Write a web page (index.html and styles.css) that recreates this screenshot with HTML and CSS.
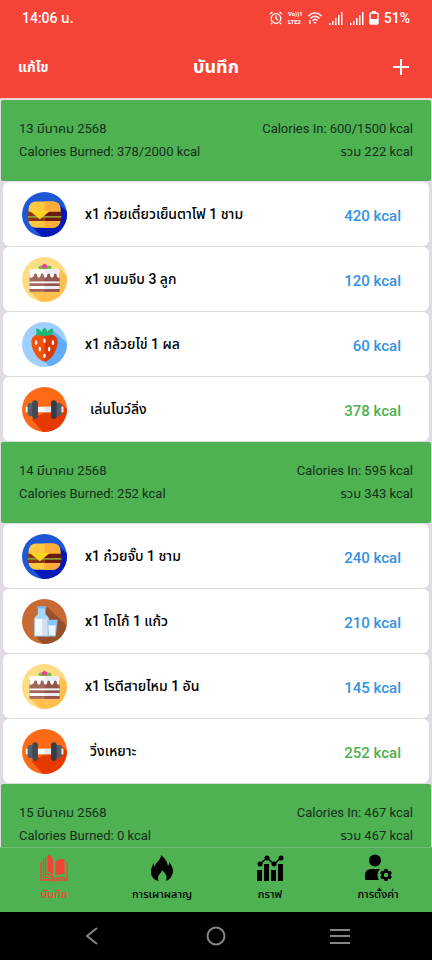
FILE: index.html
```html
<!DOCTYPE html>
<html lang="th">
<head>
<meta charset="utf-8">
<meta name="viewport" content="width=device-width, initial-scale=1">
<title>บันทึก</title>
<link rel="stylesheet" href="styles.css">
</head>
<body>
<svg class="sprite" aria-hidden="true">
  <defs>
    <clipPath id="disc"><circle cx="24" cy="24" r="24"/></clipPath>
    <symbol id="burger" viewBox="0 0 48 48">
      <g clip-path="url(#disc)">
        <path fill="#1f58d6" d="M0 0h48v48H0z"/>
        <path fill="#0519b8" d="M39 13l12 10v28H24L10 36z"/>
        <rect x="7" y="10" width="34" height="28" rx="8" fill="#ffc93f"/>
        <path fill="#ffad3a" d="M24 10h9a8 8 0 0 1 8 8v12a8 8 0 0 1-8 8h-9z"/>
        <path fill="#8a3514" d="M6 21h18v10H6z"/>
        <path fill="#6b1a10" d="M24 21h18v10H24z"/>
        <path fill="#8d9a33" d="M6 25.500h36v2H6z"/>
        <path fill="#ffd21f" d="M8 20h22L19 29z"/>
      </g>
    </symbol>
    <symbol id="cake" viewBox="0 0 48 48">
      <g clip-path="url(#disc)">
        <path fill="#ffdd85" d="M0 0h48v48H0z"/>
        <path fill="#ffc04f" d="M40 12l10 10v28H22L8 36z"/>
        <path fill="#6ec04a" d="M17 11c3-3 5-2 7 1 2-3 5-4 8-1l-2 2H19z"/>
        <path fill="#e93c9a" d="M22 12l-1-3 3-2 3 2-1 3z"/>
        <path fill="#a5665b" d="M8 17h32v20H8z"/>
        <path fill="#945449" d="M24 17h16v20H24z"/>
        <path fill="#fff" d="M8 13h32v9c-2 1-3-1-3-3s-3-2-3 0c0 4-4 4-4 0 0-2-3-2-3 0 0 4-4 4-4 0 0-2-3-2-3 0 0 4-4 4-4 0 0-2-3-2-3 0s-3 4-5 3zM8 26h32v2H8zM8 31h32v3H8z"/>
        <path fill="#dce2ec" opacity=".6" d="M24 13h16v5H24zM24 26h16v2H24zM24 31h16v3H24z"/>
      </g>
    </symbol>
    <symbol id="berry" viewBox="0 0 48 48">
      <g clip-path="url(#disc)">
        <path fill="#9fcfff" d="M0 0h48v48H0z"/>
        <path fill="#62adfa" d="M32 8l18 16v26H32L20 38z"/>
        <path fill="#f4510b" d="M24 14c8-3 14 1 14 7 0 9-8 21-14 21s-14-12-14-21c0-6 6-10 14-7z"/>
        <path fill="#d93b05" d="M24 14c8-3 14 1 14 7 0 9-8 21-14 21z"/>
        <path fill="#22b573" d="M24 15l-9-1c1-2 0-4 0-7 3 0 5 2 6 4 0-3 2-4 3-5 2 1 3 3 3 5 1-2 3-4 6-4 0 3 0 5-1 7z"/>
        <g fill="#fff"><ellipse cx="24" cy="20" rx="1.300" ry="2.500"/><ellipse cx="15" cy="22" rx="1.300" ry="2.500"/><ellipse cx="33" cy="22" rx="1.300" ry="2.500"/><ellipse cx="19" cy="29" rx="1.300" ry="2.500"/><ellipse cx="29" cy="29" rx="1.300" ry="2.500"/><ellipse cx="24" cy="36" rx="1.300" ry="2.500"/></g>
      </g>
    </symbol>
    <symbol id="milk" viewBox="0 0 48 48">
      <g clip-path="url(#disc)">
        <path fill="#c86a34" d="M0 0h48v48H0z"/>
        <path fill="#98502b" d="M26 8l24 22v20H24L14 39z"/>
        <path fill="#a9d7fb" d="M17 8h8v7c0 3 4 3 4 8v17H13V23c0-5 4-5 4-8z"/>
        <path fill="#f4f6fb" d="M14 21h8v18h-8z"/>
        <path fill="#d3def0" d="M22 21h5v18h-5z"/>
        <path fill="#6fb6f5" d="M16 8h10v2H16z"/>
        <path fill="#8ac6fa" d="M27 22h11l-2 18h-8z"/>
        <path fill="#eef3fb" d="M28 28h8l-1 11h-6z"/>
      </g>
    </symbol>
    <symbol id="dumbbell" viewBox="0 0 48 48">
      <g clip-path="url(#disc)">
        <path fill="#ff6a16" d="M0 0h48v48H0z"/>
        <path fill="#e63900" d="M41 17l9 8v25H24L10 34l21-10z"/>
        <path fill="#fff" d="M4 21h40v6H4z"/>
        <path fill="#e1e6ef" d="M24 21h20v6H24z"/>
        <rect x="6" y="17" width="9" height="14" rx="3" fill="#565d6b"/>
        <rect x="11" y="14" width="6" height="20" rx="3" fill="#414856"/>
        <rect x="33" y="17" width="9" height="14" rx="3" fill="#565d6b"/>
        <rect x="31" y="14" width="6" height="20" rx="3" fill="#343c49"/>
      </g>
    </symbol>
    <symbol id="signal" viewBox="0 0 14 13">
      <path fill="#fff" d="M0 11h1.500v2H0zM3 9h1.500v4H3zM6 6h1.500v7H6zM9 3h1.500v10H9zM12 0h1.500v13H12z"/>
    </symbol>
  </defs>
</svg>

<div class="statusbar">
  <span>14:06 น.</span>
  <div class="status-icons">
    <svg class="alarm" viewBox="0 0 14 14"><g fill="none" stroke="#fff" stroke-width="1.300"><circle cx="7" cy="7.500" r="4.800"/><path d="M7 4.500v3l2 1.500M1 3l2.500-2M13 3l-2.500-2M3 12l-1 1M11 12l1 1"/></g></svg>
    <span class="volte"><span>Vo))1</span><span>LTE2</span></span>
    <svg class="wifi" viewBox="0 0 14 12"><g fill="none" stroke="#fff" stroke-width="1.400"><path d="M.5 4c4-4 9-4 13 0M2.500 6.500c3-3 6-3 9 0M4.500 8.800c2-2 3-2 5 0"/></g><path fill="#fff" d="M5.500 10h3L7 12zM1 8h1.500v4H1z"/></svg>
    <svg class="bars"><use href="#signal"/></svg>
    <svg class="bars"><use href="#signal"/></svg>
    <svg class="battery" viewBox="0 0 10 14"><path fill="#fff" d="M3 0h4v2H3z"/><rect x="1" y="2" width="8" height="11" rx="1" fill="none" stroke="#fff" stroke-width="1.500"/><path fill="#fff" d="M1 8h8v5H1z"/></svg>
    <span>51%</span>
  </div>
</div>

<header class="appbar">
  <button class="edit" type="button">แก้ไข</button>
  <h1>บันทึก</h1>
  <button class="add" type="button" aria-label="เพิ่ม"><svg viewBox="0 0 16 16"><path stroke="#fff" stroke-width="2" d="M8 0v16M0 8h16"/></svg></button>
</header>

<main class="log">
  <section class="day">
    <div class="summary">
      <p><span>13 มีนาคม 2568</span><span>Calories In: 600/1500 kcal</span></p>
      <p><span>Calories Burned: 378/2000 kcal</span><span>รวม 222 kcal</span></p>
    </div>
    <ul>
      <li><svg><use href="#burger"/></svg><span class="name">x1 ก๋วยเตี๋ยวเย็นตาโฟ 1 ชาม</span><span class="kcal">420 kcal</span></li>
      <li><svg><use href="#cake"/></svg><span class="name">x1 ขนมจีบ 3 ลูก</span><span class="kcal">120 kcal</span></li>
      <li><svg><use href="#berry"/></svg><span class="name">x1 กล้วยไข่ 1 ผล</span><span class="kcal">60 kcal</span></li>
      <li class="exercise"><svg><use href="#dumbbell"/></svg><span class="name">เล่นโบว์ลิ่ง</span><span class="kcal">378 kcal</span></li>
    </ul>
  </section>
  <section class="day">
    <div class="summary">
      <p><span>14 มีนาคม 2568</span><span>Calories In: 595 kcal</span></p>
      <p><span>Calories Burned: 252 kcal</span><span>รวม 343 kcal</span></p>
    </div>
    <ul>
      <li><svg><use href="#burger"/></svg><span class="name">x1 ก๋วยจั๊บ 1 ชาม</span><span class="kcal">240 kcal</span></li>
      <li><svg><use href="#milk"/></svg><span class="name">x1 โกโก้ 1 แก้ว</span><span class="kcal">210 kcal</span></li>
      <li><svg><use href="#cake"/></svg><span class="name">x1 โรตีสายไหม 1 อัน</span><span class="kcal">145 kcal</span></li>
      <li class="exercise"><svg><use href="#dumbbell"/></svg><span class="name">วิ่งเหยาะ</span><span class="kcal">252 kcal</span></li>
    </ul>
  </section>
  <section class="day">
    <div class="summary">
      <p><span>15 มีนาคม 2568</span><span>Calories In: 467 kcal</span></p>
      <p><span>Calories Burned: 0 kcal</span><span>รวม 467 kcal</span></p>
    </div>
  </section>
</main>

<nav class="tabs">
  <a class="active" href="#log">
    <svg viewBox="0 0 28 28"><path fill="currentColor" d="M7.500 1c3 0 5.500 2 5.500 6v15c-1-3-3-4-5.500-4.500zM15.500 8c1-2 4-3 9-3v15c-4 0-7 0-9 2z"/><path fill="none" stroke="currentColor" stroke-width="1.300" d="M1 8v18h10c1 1.500 5 1.500 6 0h10V8M3.500 5v18.500c5-1 8 0 10 2 2-2 6-2 11-2M5.700 3v17c4 0 6 1 8 4"/></svg>
    <span>บันทึก</span>
  </a>
  <a href="#burn">
    <svg viewBox="0 0 28 28"><path fill="currentColor" d="M13 1c6 5 6 8 7 11 1-1 1-2 1-4 4 5 5 9 3 13-1 3-3 5-6 6 2-5-1-8-4-11 0 3-4 4-4 8 0 1 0 2 1 3-5-1-8-4-8-9 0-4 1-6 3-9 0 2 0 3 1 4 0-5 6-6 6-12z"/></svg>
    <span>การเผาผลาญ</span>
  </a>
  <a href="#chart">
    <svg viewBox="0 0 28 28"><g fill="currentColor"><path d="M1 16h5v11H1zM8 10h5v17H8zM15 16h5v11h-5zM22 10h5v17h-5z"/><circle cx="4" cy="10" r="2.500"/><circle cx="11" cy="4" r="2.500"/><circle cx="18" cy="10" r="2.500"/><circle cx="25" cy="4" r="2.500"/></g><path fill="none" stroke="currentColor" stroke-width="1.500" d="M4 10l7-6 7 6 7-6"/></svg>
    <span>กราฟ</span>
  </a>
  <a href="#settings">
    <svg viewBox="0 0 28 28"><circle cx="11" cy="6.500" r="6" fill="currentColor"/><path fill="currentColor" d="M1 26v-5c0-4 3-6 7-6h8c-3 3-3 8-1 11z"/><circle cx="22" cy="21" r="3.500" fill="none" stroke="currentColor" stroke-width="2.600"/><g stroke="currentColor" stroke-width="3"><path d="M22 15v2M22 25v2M16.800 18l1.700 1M25.500 23l1.700 1M16.800 24l1.700-1M25.500 19l1.700-1"/></g></svg>
    <span>การตั้งค่า</span>
  </a>
</nav>

<div class="sysnav">
  <button type="button" aria-label="ย้อนกลับ"><svg viewBox="0 0 20 20"><path d="M15 2L5 10l10 8"/></svg></button>
  <button type="button" aria-label="หน้าหลัก"><svg viewBox="0 0 20 20"><circle cx="10" cy="10" r="8.500"/></svg></button>
  <button type="button" aria-label="แอปล่าสุด"><svg viewBox="0 0 20 20"><path d="M0 4h20M0 10h20M0 17h20"/></svg></button>
</div>
</body>
</html>
```
FILE: styles.css
```css
* { box-sizing: border-box; }

body {
  margin: 0;
  height: 100vh;
  display: flex;
  flex-direction: column;
  font-family: Roboto, "Noto Sans Thai", "Noto Sans", sans-serif;
  font-size: 13px;
  color: #000;
  background: #e0dae2;
}

h1, p, ul { margin: 0; padding: 0; }
ul { list-style: none; }
svg { display: block; flex: none; }
.sprite { position: absolute; width: 0; height: 0; }

button {
  padding: 0;
  border: 0;
  background: none;
  color: inherit;
  font: inherit;
}

.statusbar,
.appbar {
  flex: none;
  display: flex;
  align-items: center;
  justify-content: space-between;
  background: #f64438;
  color: #fff;
}

.statusbar {
  height: 36px;
  padding: 0 22px;
  font-size: 14px;
  font-weight: 500;
}

.status-icons { display: flex; align-items: center; gap: 5px; }
.alarm { width: 14px; height: 14px; }
.volte { display: flex; flex-direction: column; font-size: 6px; line-height: 8px; font-weight: 700; }
.wifi { width: 14px; height: 12px; }
.bars { width: 14px; height: 13px; margin-left: 2px; }
.battery { width: 10px; height: 14px; }

.appbar {
  display: grid;
  grid-template-columns: 1fr auto 1fr;
  height: 63px;
  padding: 0 18px;
  border-bottom: 1px solid #edd3c4;
}

.edit { justify-self: start; font-size: 14px; font-weight: 700; }
.appbar h1 { font-size: 18px; font-weight: 700; }
.add { justify-self: end; padding-right: 5px; }
.add svg { width: 16px; height: 16px; }

.log {
  flex: 1;
  min-height: 0;
  overflow: auto;
  scrollbar-width: none;
  padding-top: 1px;
}

.day { padding-bottom: 1px; }

.summary {
  margin: 0 1px;
  padding: 17px 18px;
  height: 81px;
  border-radius: 2px;
  background: #4eb152;
  color: #14301a;
  font-size: 13px;
  line-height: 23px;
}

.summary p { display: flex; justify-content: space-between; white-space: nowrap; }

.day ul { display: flex; flex-direction: column; gap: 1px; padding: 1px 3px 0; }

.day li {
  display: flex;
  align-items: center;
  height: 64px;
  padding: 0 28px 0 19px;
  border-radius: 6px;
  background: #fff;
}

.day li svg { width: 45px; height: 45px; }
.name { flex: 1; margin-left: 18px; font-size: 14px; font-weight: 500; white-space: nowrap; }
.exercise .name { margin-left: 23px; }
.kcal { padding-top: 4px; font-size: 15px; font-weight: 500; color: #3292e4; }
.exercise .kcal { color: #4caf50; }

.tabs {
  flex: none;
  display: grid;
  grid-template-columns: repeat(4, 1fr);
  height: 65px;
  padding-top: 6px;
  border-top: 1px solid #6fbd72;
  background: #4eb152;
}

.tabs a {
  display: flex;
  flex-direction: column;
  align-items: center;
  gap: 4px;
  color: #000;
  font-size: 11px;
  font-weight: 500;
  line-height: 18px;
  text-decoration: none;
}

.tabs svg { width: 28px; height: 28px; }
.tabs .active { color: #f44336; }

.sysnav {
  flex: none;
  display: flex;
  align-items: center;
  justify-content: center;
  gap: 104px;
  height: 48px;
  background: #000;
}

.sysnav svg { width: 20px; height: 20px; fill: none; stroke: #858585; stroke-width: 2; }
```
